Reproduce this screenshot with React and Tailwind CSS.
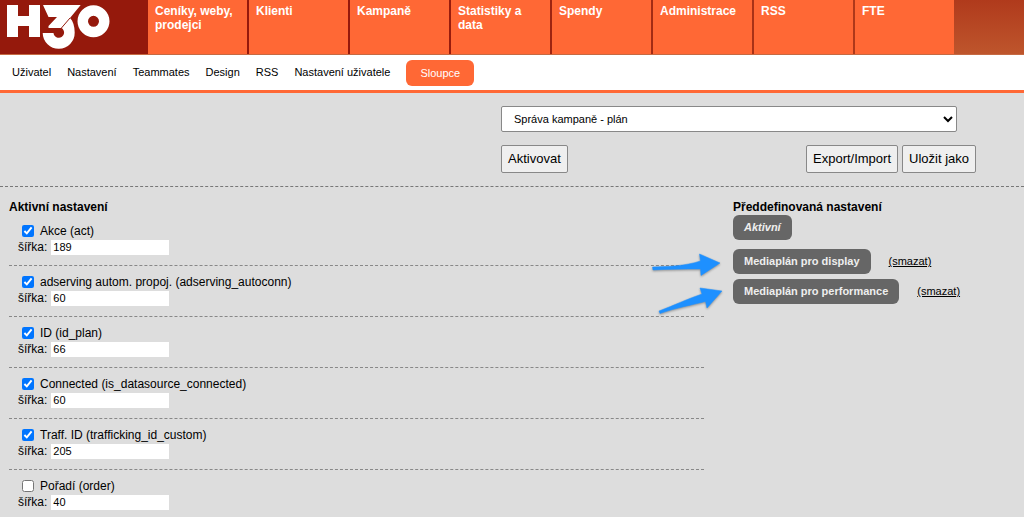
import React from "react";

const nav = ["Ceníky, weby, prodejci", "Klienti", "Kampaně", "Statistiky a data", "Spendy", "Administrace", "RSS", "FTE"];
const subnav = ["Uživatel", "Nastavení", "Teammates", "Design", "RSS", "Nastavení uživatele"];
const columns = [
  { id: "act", label: "Akce (act)", width: 189, on: true },
  { id: "adserving_autoconn", label: "adserving autom. propoj. (adserving_autoconn)", width: 60, on: true },
  { id: "id_plan", label: "ID (id_plan)", width: 66, on: true },
  { id: "is_datasource_connected", label: "Connected (is_datasource_connected)", width: 60, on: true },
  { id: "trafficking_id_custom", label: "Traff. ID (trafficking_id_custom)", width: 205, on: true },
  { id: "order", label: "Pořadí (order)", width: 40, on: false },
];
const presets = ["Mediaplán pro display", "Mediaplán pro performance"];

function Logo() {
  return (
    <svg width="104" height="46" viewBox="0 0 104 46" role="img" aria-label="H3O">
      <g fill="#fff">
        <path d="M0 1H11V12H22V1H33V33H22V22H11V33H0Z" />
        <path d="M36 1H73.700L63 14C66 17 67.700 22 67.700 28.500A16 16 0 0 1 35.700 29H46.500A5.300 5.300 0 1 0 54.500 24H41.500V22L50 13H41.500Z" />
        <path fillRule="evenodd" d="M86.500 1.300a16 16 0 1 1 0 32a16 16 0 1 1 0-32ZM86.500 11.800a5.500 5.500 0 1 0 0 11a5.500 5.500 0 1 0 0-11Z" />
      </g>
      <path d="M54 24.500L63 14" stroke="#95190c" strokeWidth="1" />
    </svg>
  );
}

function Arrow({ className, d }) {
  return (
    <svg className={className} width="76" height="36" viewBox="0 0 76 36" aria-hidden="true">
      <path d={d} fill="#1e90ff" stroke="#1e90ff" strokeWidth="0.5" strokeLinejoin="round" />
    </svg>
  );
}

const arrows = [
  "M3.500 18C20 17.500 36 17 51.500 12L50.500 5L71 14L52 26.500L51.500 20C36 20 20 20 4 21Z",
  "M10 32C26 26 38 20 53 15L51 9L73 12L58 29L56.500 22.500C43 26 26 29 11 34.500Z",
];

export default function App() {
  return (
    <div className="h-screen overflow-hidden bg-[#ddd] font-['Liberation_Sans',Arial,sans-serif] text-xs text-black">
      <header className="flex h-[55px] border-b border-[#c56a43] bg-linear-to-r from-[#95190c] from-40% to-[#b8431f]">
        <a href="#home" className="w-[148px] shrink-0 bg-[#95190c] pt-1 pl-[7px]"><Logo /></a>
        <nav className="flex gap-0.5">
          {nav.map((n) => (
            <a key={n} href="#nav" className="w-[99px] bg-[#ff6835] pt-1 pr-1 pl-[7px] leading-[14px] font-bold text-white">{n}</a>
          ))}
        </nav>
        <div className="grow bg-linear-to-b from-[#b03a1c] to-[#be552c]" />
      </header>
      <nav className="flex h-[38px] items-center gap-4 border-b-3 border-[#ff6835] bg-white pl-3 text-[11px]">
        {subnav.map((n) => <a key={n} href="#section">{n}</a>)}
        <a href="#columns" className="rounded-md bg-[#ff6835] px-[14px] py-1 leading-[18px] text-white">Sloupce</a>
      </nav>

      <section className="border-b border-dashed border-[#777] pt-[13px] pb-[13px]">
        <div className="ml-[501px] w-[475px] max-w-full">
          <select aria-label="Nastavení" className="block h-[26px] w-[456px] rounded-xs border border-[#888] bg-white pl-2 text-[11px]">
            <option>Správa kampaně - plán</option>
          </select>
          <div className="mt-[13px] flex gap-1 text-[13px]">
            <button type="button" className="mr-auto h-[28px] rounded-xs border border-[#888] bg-[#efefef] px-1.5">Aktivovat</button>
            <button type="button" className="h-[28px] rounded-xs border border-[#888] bg-[#efefef] px-1.5">Export/Import</button>
            <button type="button" className="h-[28px] rounded-xs border border-[#888] bg-[#efefef] px-1.5">Uložit jako</button>
          </div>
        </div>
      </section>

      <main className="flex pt-[12px] pl-[9px]">
        <section className="w-[695px] shrink-0">
          <h2 className="leading-4 font-bold">Aktivní nastavení</h2>
          {columns.map((c) => (
            <div key={c.id} className="h-[51px] border-b border-dashed border-[#888] pt-2 pl-[9px]">
              <div className="flex h-4 items-center">
                <input id={c.id} type="checkbox" defaultChecked={c.on} className="mr-1.5 ml-1 size-3" />
                <label htmlFor={c.id}>{c.label}</label>
              </div>
              <label className="flex h-4 items-center gap-1">
                šířka:
                <input type="text" defaultValue={c.width} className="h-[15px] w-[118px] bg-white px-0.5 text-[11px]" />
              </label>
            </div>
          ))}
        </section>
        <section className="ml-[29px] text-[11px]">
          <h2 className="text-xs leading-4 font-bold">Předdefinovaná nastavení</h2>
          <button type="button" className="mb-[9px] block h-[25px] rounded-md bg-[#666] px-[11px] font-bold text-[#eee] italic">Aktivní</button>
          {presets.map((p, i) => (
            <div key={p} className="relative mb-[5px] flex items-center gap-[18px]">
              <Arrow d={arrows[i]} className="absolute top-0 -left-[84px] drop-shadow-[0_1px_1px_rgba(0,0,0,0.35)]" />
              <button type="button" className="h-[25px] rounded-md bg-[#666] px-[11px] font-bold text-[#eee]">{p}</button>
              <a href="#delete" className="underline">(smazat)</a>
            </div>
          ))}
        </section>
      </main>
    </div>
  );
}
